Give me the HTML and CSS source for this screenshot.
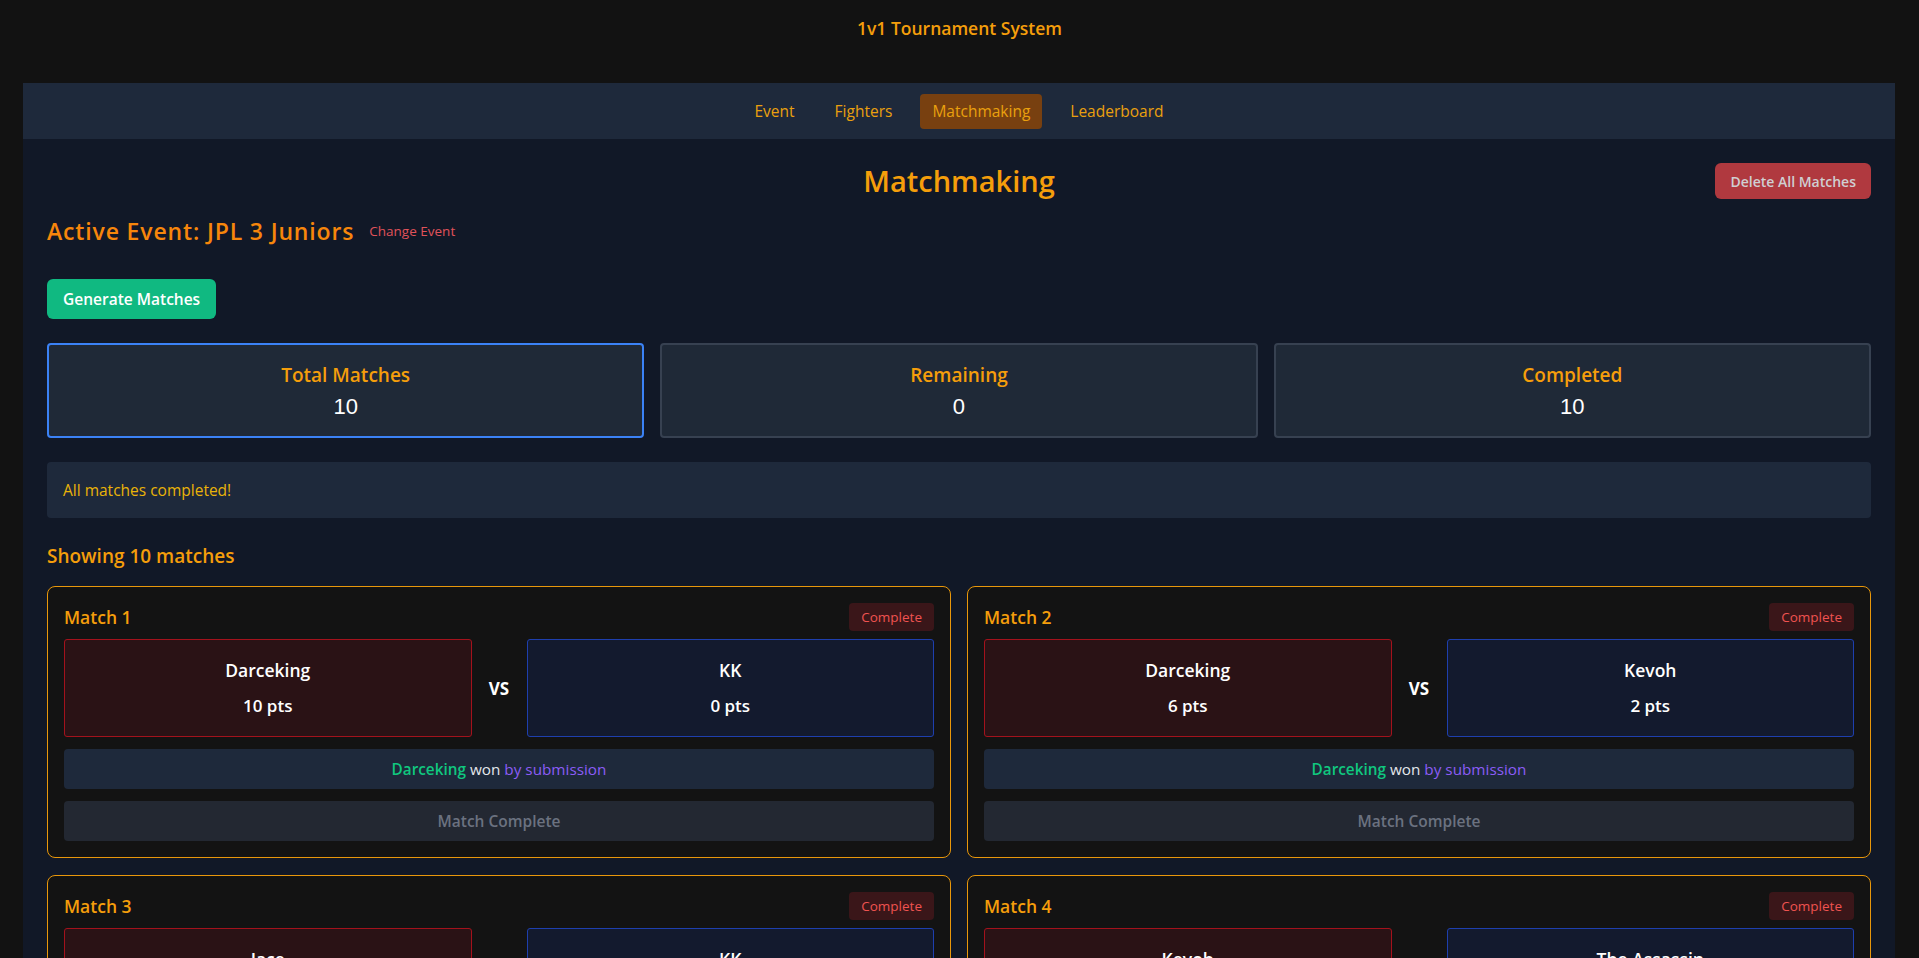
FILE: index.html
```html
<!DOCTYPE html>
<html lang="en">
<head>
<meta charset="utf-8">
<title>1v1 Tournament System</title>
<link rel="stylesheet" href="styles.css">
</head>
<body>
<header class="site-header">
  <div class="site-title">1v1 Tournament System</div>
</header>
<div class="app">
  <nav class="nav">
    <a class="nav-item">Event</a>
    <a class="nav-item">Fighters</a>
    <a class="nav-item active">Matchmaking</a>
    <a class="nav-item">Leaderboard</a>
  </nav>
  <main class="main">
    <div class="page-head">
      <h1 class="page-title">Matchmaking</h1>
      <button class="btn-delete">Delete All Matches</button>
    </div>
    <div class="event-row">
      <h2 class="event-title">Active Event: JPL 3 Juniors</h2>
      <a class="change-event">Change Event</a>
    </div>
    <button class="btn-generate">Generate Matches</button>

    <div class="stats">
      <div class="stat selected">
        <div class="stat-label">Total Matches</div>
        <div class="stat-value">10</div>
      </div>
      <div class="stat">
        <div class="stat-label">Remaining</div>
        <div class="stat-value">0</div>
      </div>
      <div class="stat">
        <div class="stat-label">Completed</div>
        <div class="stat-value">10</div>
      </div>
    </div>

    <div class="info-box">All matches completed!</div>

    <h3 class="showing">Showing 10 matches</h3>

    <div class="matches">
      <div class="match">
        <div class="match-head"><span class="match-name">Match 1</span><span class="badge">Complete</span></div>
        <div class="fighters">
          <div class="fighter red"><div class="f-name">Darceking</div><div class="f-pts">10 pts</div></div>
          <div class="vs">VS</div>
          <div class="fighter blue"><div class="f-name">KK</div><div class="f-pts">0 pts</div></div>
        </div>
        <div class="result"><span class="winner">Darceking</span> won <span class="method">by submission</span></div>
        <button class="btn-complete">Match Complete</button>
      </div>
      <div class="match">
        <div class="match-head"><span class="match-name">Match 2</span><span class="badge">Complete</span></div>
        <div class="fighters">
          <div class="fighter red"><div class="f-name">Darceking</div><div class="f-pts">6 pts</div></div>
          <div class="vs">VS</div>
          <div class="fighter blue"><div class="f-name">Kevoh</div><div class="f-pts">2 pts</div></div>
        </div>
        <div class="result"><span class="winner">Darceking</span> won <span class="method">by submission</span></div>
        <button class="btn-complete">Match Complete</button>
      </div>
      <div class="match">
        <div class="match-head"><span class="match-name">Match 3</span><span class="badge">Complete</span></div>
        <div class="fighters">
          <div class="fighter red"><div class="f-name">Jace</div><div class="f-pts">4 pts</div></div>
          <div class="vs">VS</div>
          <div class="fighter blue"><div class="f-name">KK</div><div class="f-pts">2 pts</div></div>
        </div>
        <div class="result"><span class="winner">Jace</span> won <span class="method">by points</span></div>
        <button class="btn-complete">Match Complete</button>
      </div>
      <div class="match">
        <div class="match-head"><span class="match-name">Match 4</span><span class="badge">Complete</span></div>
        <div class="fighters">
          <div class="fighter red"><div class="f-name">Kevoh</div><div class="f-pts">0 pts</div></div>
          <div class="vs">VS</div>
          <div class="fighter blue"><div class="f-name">The Assassin</div><div class="f-pts">8 pts</div></div>
        </div>
        <div class="result"><span class="winner">The Assassin</span> won <span class="method">by submission</span></div>
        <button class="btn-complete">Match Complete</button>
      </div>
    </div>
  </main>
</div>
</body>
</html>
```

FILE: styles.css
```css
* { box-sizing: border-box; }
html, body { margin: 0; padding: 0; }
body {
  background: #121212;
  font-family: "Open Sans", "Noto Sans", sans-serif;
  color: #e5e7eb;
}
.site-header {
  height: 83px;
  padding-top: 16px;
  text-align: center;
}
.site-title {
  font-size: 17.5px;
  line-height: 24px;
  font-weight: 600;
  color: #f59e0b;
}
.app {
  margin: 0 24px 0 23px;
  background: #111827;
  min-height: 875px;
}
.nav {
  height: 56px;
  background: #1e293b;
  display: flex;
  justify-content: center;
  align-items: center;
  gap: 16px;
}
.nav-item {
  display: flex;
  align-items: center;
  height: 35px;
  padding: 0 12px;
  border-radius: 4px;
  font-size: 15.5px;
  color: #eaa00e;
}
.nav-item.active {
  background: #784010;
}
.main {
  padding: 24px;
}
.page-head {
  display: grid;
  grid-template-columns: 1fr auto 1fr;
  align-items: center;
  height: 36px;
}
.page-title {
  grid-column: 2;
  margin: 0;
  font-size: 29px;
  line-height: 36px;
  font-weight: 600;
  color: #f59e0b;
}
.btn-delete {
  grid-column: 3;
  justify-self: end;
  height: 36px;
  padding: 0 15px;
  border: 0;
  border-radius: 6px;
  background: #b0393f;
  color: #cfcfd2;
  font-family: inherit;
  font-size: 14px;
  font-weight: 600;
}
.event-row {
  display: flex;
  align-items: center;
  margin-top: 17px;
  height: 30px;
}
.event-title {
  margin: 0;
  font-size: 23px;
  line-height: 30px;
  font-weight: 600;
  letter-spacing: 0.85px;
  color: #f7860b;
}
.change-event {
  margin-left: 15px;
  font-size: 13.5px;
  color: #e0525a;
}
.btn-generate {
  display: block;
  margin-top: 33px;
  height: 40px;
  padding: 0 16px;
  border: 0;
  border-radius: 6px;
  background: #10b981;
  color: #ffffff;
  font-family: inherit;
  font-size: 15.5px;
  font-weight: 600;
}
.stats {
  margin-top: 24px;
  display: grid;
  grid-template-columns: repeat(3, 1fr);
  gap: 16px;
}
.stat {
  background: #1f2937;
  border: 2px solid #374151;
  border-radius: 4px;
  padding: 17px 16px 15px;
  text-align: center;
}
.stat.selected {
  border-color: #3b82f6;
}
.stat-label {
  font-size: 19px;
  line-height: 26px;
  font-weight: 600;
  color: #f59e0b;
}
.stat-value {
  margin-top: 5px;
  font-family: "Liberation Sans", Arial, sans-serif;
  font-size: 22px;
  line-height: 28px;
  color: #ffffff;
}
.info-box {
  margin-top: 24px;
  background: #1e293b;
  border-radius: 4px;
  padding: 16px;
  font-size: 15.5px;
  line-height: 24px;
  color: #eab308;
}
.showing {
  margin: 24px 0 0;
  font-size: 19px;
  line-height: 28px;
  font-weight: 600;
  color: #f59e0b;
}
.matches {
  margin-top: 16px;
  display: grid;
  grid-template-columns: 1fr 1fr;
  gap: 17px 16px;
}
.match {
  background: #131313;
  border: 1px solid #e8970b;
  border-radius: 8px;
  padding: 16px;
}
.match-head {
  display: flex;
  justify-content: space-between;
  align-items: center;
  height: 28px;
}
.match-name {
  font-size: 17.5px;
  font-weight: 600;
  color: #f59e0b;
}
.badge {
  height: 28px;
  display: flex;
  align-items: center;
  padding: 0 12px;
  border-radius: 4px;
  background: #3a1619;
  color: #ef5350;
  font-size: 13.5px;
}
.fighters {
  margin-top: 8px;
  display: grid;
  grid-template-columns: 1fr auto 1fr;
  gap: 16px;
  align-items: center;
}
.fighter {
  border-radius: 3px;
  padding: 18px 8px;
  text-align: center;
  color: #ffffff;
}
.fighter.red {
  background: #2a1215;
  border: 1px solid #a3121c;
}
.fighter.blue {
  background: #131a2e;
  border: 1px solid #1e3fae;
}
.f-name {
  font-size: 17.5px;
  line-height: 24px;
  font-weight: 600;
}
.f-pts {
  margin-top: 12px;
  font-size: 17px;
  line-height: 24px;
  font-weight: 600;
}
.vs {
  font-size: 17px;
  font-weight: 700;
  color: #ffffff;
  width: 23px;
  text-align: center;
}
.result {
  margin-top: 12px;
  height: 40px;
  display: flex;
  justify-content: center;
  align-items: center;
  gap: 4px;
  background: #1e293b;
  border-radius: 4px;
  font-size: 15.3px;
  color: #e5e7eb;
}
.winner { color: #10c77f; font-weight: 600; }
.method { color: #8b5cf6; }
.btn-complete {
  display: block;
  width: 100%;
  margin-top: 12px;
  height: 40px;
  border: 0;
  border-radius: 4px;
  background: #232832;
  color: #6b7280;
  font-family: inherit;
  font-size: 15.5px;
  font-weight: 600;
}
```
